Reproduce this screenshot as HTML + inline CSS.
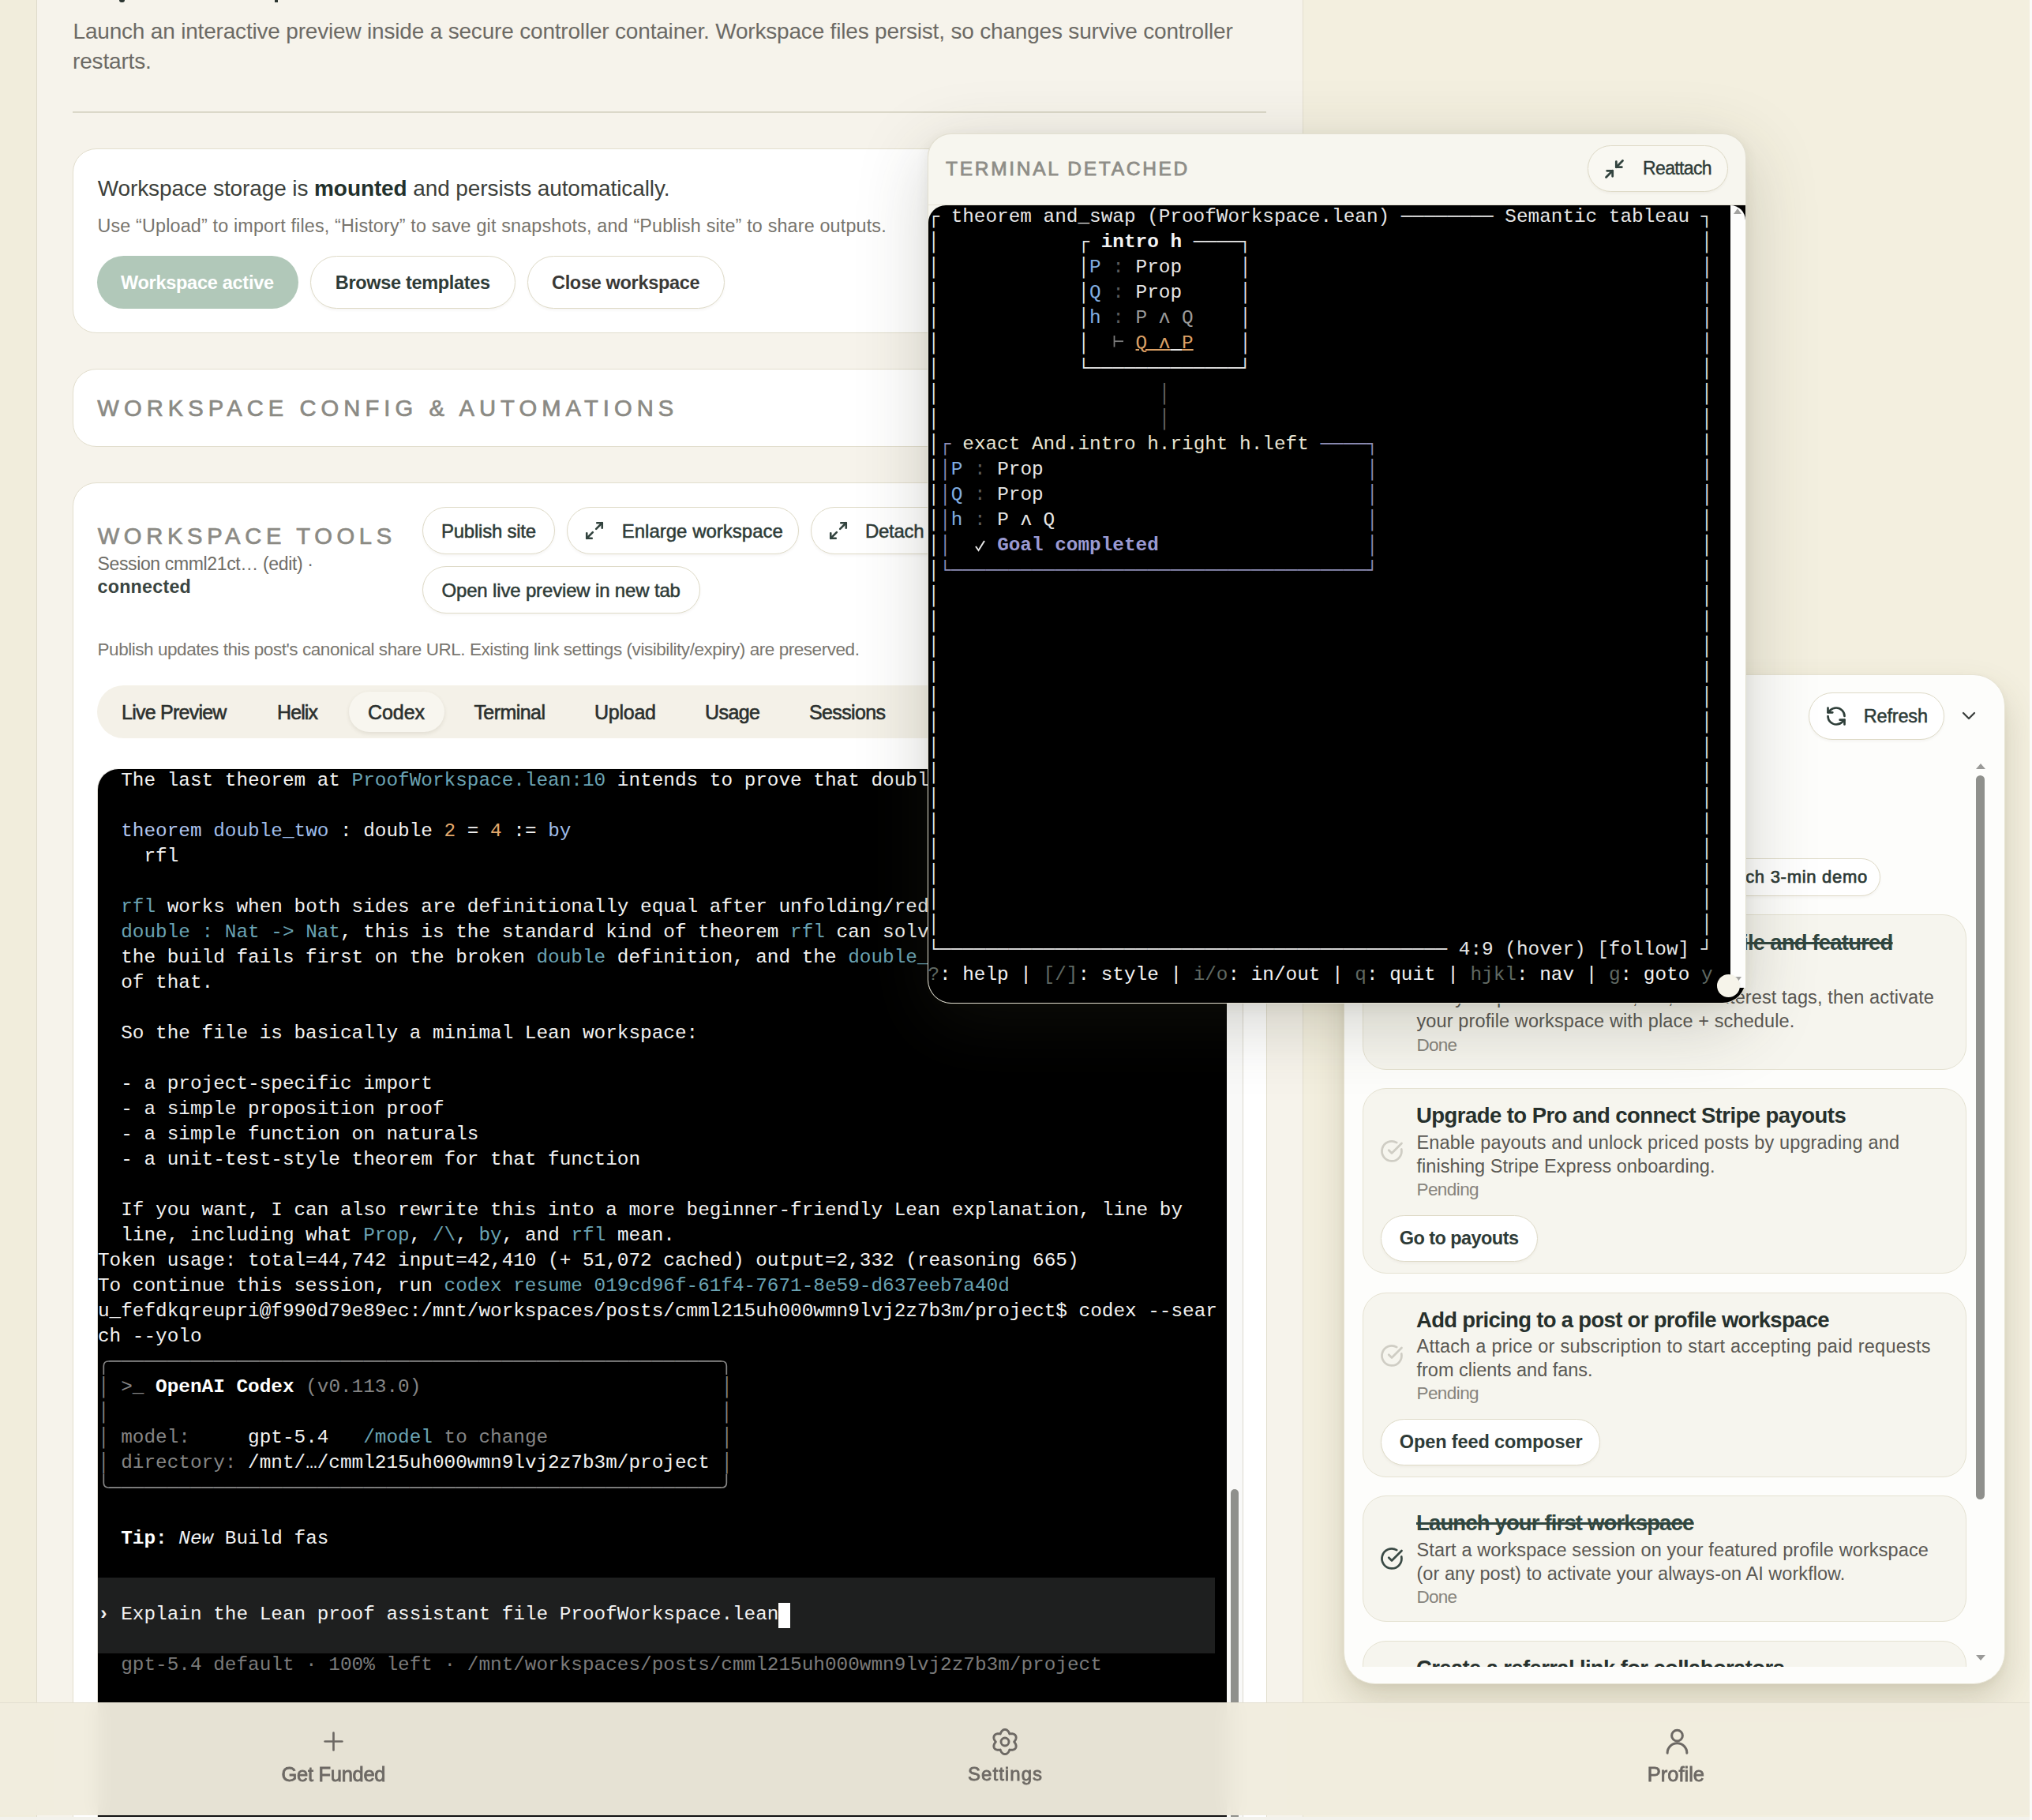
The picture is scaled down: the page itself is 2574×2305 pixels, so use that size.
<!DOCTYPE html><html><head><meta charset="utf-8"><style>
html,body{margin:0;padding:0;}
body{width:2574px;height:2305px;overflow:hidden;position:relative;background:#f3efdf;font-family:"Liberation Sans",sans-serif;}
.a{position:absolute;box-sizing:border-box;}
.t{position:absolute;white-space:pre;font-family:"Liberation Sans",sans-serif;}
.tr{position:absolute;white-space:pre;font-family:"Liberation Mono",monospace;font-size:24.36px;line-height:32px;color:#f2f2f2;}
.btn{position:absolute;box-sizing:border-box;background:#fff;border:1.5px solid #dedac7;border-radius:40px;box-shadow:0 2px 3px rgba(120,110,80,0.06);}
svg{position:absolute;overflow:visible;}
</style></head><body>
<div class="a" style="left:0px;top:0px;width:46px;height:2305px;background:#f1eddc;"></div><div class="a" style="left:46px;top:-60px;width:1605px;height:2460px;background:#f6f3eb;border-left:1px solid #dedacb;border-right:1px solid #e2decf;"></div><div class="a" style="left:151px;top:0px;width:7px;height:3px;background:#2b3531;border-radius:0 0 3px 3px;"></div><div class="a" style="left:348px;top:0px;width:4px;height:3px;background:#2b3531;"></div><div class="t" style="left:92.50px;top:26.29px;font-size:28px;line-height:28px;color:#6c6a65;font-weight:400;letter-spacing:-0.188px;">Launch an interactive preview inside a secure controller container. Workspace files persist, so changes survive controller</div><div class="t" style="left:92.00px;top:64.29px;font-size:28px;line-height:28px;color:#6c6a65;font-weight:400;letter-spacing:-0.17px;">restarts.</div><div class="a" style="left:92px;top:141px;width:1512px;height:2px;background:#dbd8c9;"></div><div class="a" style="left:92px;top:188px;width:1512px;height:234px;background:#fff;border:1.5px solid #e2decd;border-radius:30px;"></div><div class="t" style="left:123.70px;top:224.79px;font-size:28px;line-height:28px;color:#3c3f3b;font-weight:400;letter-spacing:-0.1px;">Workspace storage is <b style="color:#22312c">mounted</b> and persists automatically.</div><div class="t" style="left:123.50px;top:275.27px;font-size:23.3px;line-height:23.3px;color:#77746d;font-weight:400;letter-spacing:0.18px;">Use “Upload” to import files, “History” to save git snapshots, and “Publish site” to share outputs.</div><div class="a" style="left:123px;top:324px;width:255px;height:67px;background:#b1c8b9;border-radius:40px;"></div><div class="t" style="left:153.00px;top:346.70px;font-size:23.5px;line-height:23.5px;color:#ffffff;font-weight:700;letter-spacing:-0.273px;">Workspace active</div><div class="btn" style="left:393px;top:324px;width:260px;height:67px;"></div><div class="t" style="left:424.80px;top:346.70px;font-size:23.5px;line-height:23.5px;color:#2e3b37;font-weight:700;letter-spacing:-0.327px;">Browse templates</div><div class="btn" style="left:668px;top:324px;width:250px;height:67px;"></div><div class="t" style="left:699.00px;top:346.70px;font-size:23.5px;line-height:23.5px;color:#3a3936;font-weight:700;letter-spacing:-0.321px;">Close workspace</div><div class="a" style="left:92px;top:467px;width:1512px;height:99px;background:#fff;border:1.5px solid #e2decd;border-radius:30px;"></div><div class="t" style="left:123.30px;top:502.88px;font-size:29.2px;line-height:29.2px;color:#8b8a84;font-weight:400;letter-spacing:6.048px;-webkit-text-stroke:0.7px #8b8a84;">WORKSPACE CONFIG &amp; AUTOMATIONS</div><div class="a" style="left:92px;top:611px;width:1513px;height:1789px;background:#fff;border:1.5px solid #e2decd;border-radius:30px;"></div><div class="t" style="left:123.70px;top:665.08px;font-size:29.2px;line-height:29.2px;color:#8b8a84;font-weight:400;letter-spacing:5.636px;-webkit-text-stroke:0.7px #8b8a84;">WORKSPACE TOOLS</div><div class="t" style="left:123.50px;top:702.53px;font-size:23px;line-height:23px;color:#6e6c66;font-weight:400;letter-spacing:-0.36px;">Session cmml21ct… (edit) ·</div><div class="t" style="left:123.50px;top:732.07px;font-size:23.3px;line-height:23.3px;color:#3a4541;font-weight:700;letter-spacing:0.225px;">connected</div><div class="btn" style="left:535px;top:642px;width:168px;height:60px;"></div><div class="t" style="left:559.00px;top:660.88px;font-size:24px;line-height:24px;color:#2e3b37;font-weight:400;letter-spacing:-0.245px;-webkit-text-stroke:0.5px #2e3b37;">Publish site</div><div class="btn" style="left:718px;top:642px;width:294px;height:60px;"></div><svg style="left:740px;top:659px" width="26" height="26" viewBox="0 0 24 24" fill="none" stroke="#33443f" stroke-width="2.4" stroke-linecap="round" stroke-linejoin="round"><polyline points="15 3 21 3 21 9"/><polyline points="9 21 3 21 3 15"/><line x1="21" y1="3" x2="14" y2="10"/><line x1="3" y1="21" x2="10" y2="14"/></svg><div class="t" style="left:787.70px;top:660.88px;font-size:24px;line-height:24px;color:#2e3b37;font-weight:400;letter-spacing:0.006px;-webkit-text-stroke:0.5px #2e3b37;">Enlarge workspace</div><div class="btn" style="left:1027px;top:642px;width:294px;height:60px;"></div><svg style="left:1049px;top:659px" width="26" height="26" viewBox="0 0 24 24" fill="none" stroke="#33443f" stroke-width="2.4" stroke-linecap="round" stroke-linejoin="round"><polyline points="15 3 21 3 21 9"/><polyline points="9 21 3 21 3 15"/><line x1="21" y1="3" x2="14" y2="10"/><line x1="3" y1="21" x2="10" y2="14"/></svg><div class="t" style="left:1096.00px;top:660.88px;font-size:24px;line-height:24px;color:#2e3b37;font-weight:400;letter-spacing:-0.3px;-webkit-text-stroke:0.5px #2e3b37;">Detach terminal</div><div class="btn" style="left:535px;top:717px;width:352px;height:60px;"></div><div class="t" style="left:559.50px;top:736.18px;font-size:24px;line-height:24px;color:#2e3b37;font-weight:400;letter-spacing:-0.163px;-webkit-text-stroke:0.5px #2e3b37;">Open live preview in new tab</div><div class="t" style="left:123.50px;top:811.55px;font-size:22.5px;line-height:22.5px;color:#79766f;font-weight:400;letter-spacing:-0.446px;">Publish updates this post's canonical share URL. Existing link settings (visibility/expiry) are preserved.</div><div class="a" style="left:123px;top:868px;width:1451px;height:67px;background:#f4f1e8;border-radius:34px;"></div><div class="a" style="left:442px;top:876px;width:121px;height:51px;background:#f8f6ef;border-radius:26px;box-shadow:0 2px 5px rgba(90,80,50,0.12);"></div><div class="t" style="left:154.00px;top:890.23px;font-size:25px;line-height:25px;color:#2b302e;font-weight:400;letter-spacing:-0.755px;-webkit-text-stroke:0.6px #2b302e;">Live Preview</div><div class="t" style="left:351.00px;top:890.23px;font-size:25px;line-height:25px;color:#2b302e;font-weight:400;letter-spacing:-0.9px;-webkit-text-stroke:0.6px #2b302e;">Helix</div><div class="t" style="left:466.00px;top:890.23px;font-size:25px;line-height:25px;color:#2b302e;font-weight:400;letter-spacing:-0.075px;-webkit-text-stroke:0.6px #2b302e;">Codex</div><div class="t" style="left:600.40px;top:890.23px;font-size:25px;line-height:25px;color:#2b302e;font-weight:400;letter-spacing:-0.557px;-webkit-text-stroke:0.6px #2b302e;">Terminal</div><div class="t" style="left:753.00px;top:890.23px;font-size:25px;line-height:25px;color:#2b302e;font-weight:400;letter-spacing:-0.24px;-webkit-text-stroke:0.6px #2b302e;">Upload</div><div class="t" style="left:893.00px;top:890.23px;font-size:25px;line-height:25px;color:#2b302e;font-weight:400;letter-spacing:-0.575px;-webkit-text-stroke:0.6px #2b302e;">Usage</div><div class="t" style="left:1025.00px;top:890.23px;font-size:25px;line-height:25px;color:#2b302e;font-weight:400;letter-spacing:-0.629px;-webkit-text-stroke:0.6px #2b302e;">Sessions</div><div class="t" style="left:1185.00px;top:890.23px;font-size:25px;line-height:25px;color:#2b302e;font-weight:400;letter-spacing:1.2px;-webkit-text-stroke:0.6px #2b302e;">History</div><div class="a" style="left:123px;top:973px;width:1452px;height:1427px;background:#f9f9f8;border-left:1px solid #dcd9cf;border-right:1px solid #dcd9cf;border-top-left-radius:27px;"></div><div class="a" style="left:124px;top:973.5px;width:1430px;height:1426.5px;background:#000;border-top-left-radius:26px;"></div><div class="a" style="left:1558.5px;top:1886px;width:10.5px;height:514px;background:#8f908c;border-radius:5px;"></div><svg style="left:124.00px;top:1708.50px" width="15" height="32" viewBox="0 0 15 32" fill="none" stroke="#858585" stroke-width="1.72"><path d="M7.31 32 V21.0 Q7.31 15.0 13.309999999999999 15.0 H15.118378997599999"/></svg><svg style="left:913.39px;top:1708.50px" width="15" height="32" viewBox="0 0 15 32" fill="none" stroke="#858585" stroke-width="1.72"><path d="M-0.5 15.0 H1.3099999999999996 Q7.31 15.0 7.31 21.0 V32"/></svg><svg style="left:124.00px;top:1868.50px" width="15" height="32" viewBox="0 0 15 32" fill="none" stroke="#858585" stroke-width="1.72"><path d="M7.31 -2.2 V9.0 Q7.31 15.0 13.309999999999999 15.0 H15.118378997599999"/></svg><svg style="left:913.39px;top:1868.50px" width="15" height="32" viewBox="0 0 15 32" fill="none" stroke="#858585" stroke-width="1.72"><path d="M-0.5 15.0 H1.3099999999999996 Q7.31 15.0 7.31 9.0 V-2.2"/></svg><div class="a" style="left:124px;top:1997.5px;width:1415px;height:96.0px;background:#1e1f1f;"></div><div class="tr" style="left:124.00px;top:972.50px;">  The last theorem at <span style="color:#6aa3b3">ProofWorkspace.lean:10</span> intends to prove that double 2 = 4 by reflexivity.</div><div class="tr" style="left:124.00px;top:1036.50px;">  <span style="color:#b2c6ef">theorem</span> <span style="color:#9fbdea">double_two</span> : double <span style="color:#e2a86c">2</span> = <span style="color:#e2a86c">4</span> := <span style="color:#9fbdea">by</span></div><div class="tr" style="left:124.00px;top:1068.50px;">    rfl</div><div class="tr" style="left:124.00px;top:1132.50px;">  <span style="color:#6aa3b3">rfl</span> works when both sides are definitionally equal after unfolding/reduction.</div><div class="tr" style="left:124.00px;top:1164.50px;">  <span style="color:#6aa3b3">double : Nat -&gt; Nat</span>, this is the standard kind of theorem <span style="color:#6aa3b3">rfl</span> can solve. In this repo,</div><div class="tr" style="left:124.00px;top:1196.50px;">  the build fails first on the broken <span style="color:#6aa3b3">double</span> definition, and the <span style="color:#6aa3b3">double_two</span> proof fails because</div><div class="tr" style="left:124.00px;top:1228.50px;">  of that.</div><div class="tr" style="left:124.00px;top:1292.50px;">  So the file is basically a minimal Lean workspace:</div><div class="tr" style="left:124.00px;top:1356.50px;">  - a project-specific import</div><div class="tr" style="left:124.00px;top:1388.50px;">  - a simple proposition proof</div><div class="tr" style="left:124.00px;top:1420.50px;">  - a simple function on naturals</div><div class="tr" style="left:124.00px;top:1452.50px;">  - a unit-test-style theorem for that function</div><div class="tr" style="left:124.00px;top:1516.50px;">  If you want, I can also rewrite this into a more beginner-friendly Lean explanation, line by</div><div class="tr" style="left:124.00px;top:1548.50px;">  line, including what <span style="color:#6aa3b3">Prop</span>, <span style="color:#6aa3b3">/\</span>, <span style="color:#6aa3b3">by</span>, and <span style="color:#6aa3b3">rfl</span> mean.</div><div class="tr" style="left:124.00px;top:1580.50px;">Token usage: total=44,742 input=42,410 (+ 51,072 cached) output=2,332 (reasoning 665)</div><div class="tr" style="left:124.00px;top:1612.50px;">To continue this session, run <span style="color:#6aa3b3">codex resume 019cd96f-61f4-7671-8e59-d637eeb7a40d</span></div><div class="tr" style="left:124.00px;top:1644.50px;">u_fefdkqreupri@f990d79e89ec:/mnt/workspaces/posts/cmml215uh000wmn9lvj2z7b3m/project$ codex --sear</div><div class="tr" style="left:124.00px;top:1676.50px;">ch --yolo</div><div class="tr" style="left:124.00px;top:1708.50px;"><span style="color:#858585"> ───────────────────────────────────────────────────── </span></div><div class="tr" style="left:124.00px;top:1740.50px;"><span style="color:#858585">│</span><span style="color:#858585"> &gt;_ </span><span style="font-weight:700;color:#fff">OpenAI Codex</span><span style="color:#858585"> (v0.113.0)</span>                          <span style="color:#858585">│</span></div><div class="tr" style="left:124.00px;top:1772.50px;"><span style="color:#858585">│                                                     │</span></div><div class="tr" style="left:124.00px;top:1804.50px;"><span style="color:#858585">│</span><span style="color:#858585"> model:     </span>gpt-5.4   <span style="color:#6aa3b3">/model</span><span style="color:#858585"> to change</span>               <span style="color:#858585">│</span></div><div class="tr" style="left:124.00px;top:1836.50px;"><span style="color:#858585">│</span><span style="color:#858585"> directory: </span>/mnt/…/cmml215uh000wmn9lvj2z7b3m/project <span style="color:#858585">│</span></div><div class="tr" style="left:124.00px;top:1868.50px;"><span style="color:#858585"> ───────────────────────────────────────────────────── </span></div><div class="tr" style="left:124.00px;top:1932.50px;">  <span style="font-weight:700;color:#fff">Tip:</span> <span style="font-style:italic">New</span> Build fas</div><div class="tr" style="left:124.00px;top:2092.50px;"><span style="color:#7a7a7a">  gpt-5.4 default · 100% left · /mnt/workspaces/posts/cmml215uh000wmn9lvj2z7b3m/project</span></div><div class="tr" style="left:124.00px;top:2028.50px;"><span style="font-weight:700">› </span>Explain the Lean proof assistant file ProofWorkspace.lean</div><div class="a" style="left:986px;top:2030px;width:15px;height:32px;background:#fff;"></div><div class="a" style="left:1702px;top:854px;width:838px;height:1279px;background:#fdfdfb;border:1px solid #e7e3d3;border-radius:40px;box-shadow:0 22px 44px rgba(90,80,40,0.20), 0 4px 10px rgba(90,80,40,0.06);"></div><div class="btn" style="left:2291px;top:877px;width:172px;height:60px;"></div><svg style="left:2312px;top:893px" width="28" height="28" viewBox="0 0 24 24" fill="none" stroke="#2f3f3a" stroke-width="2.3" stroke-linecap="round" stroke-linejoin="round"><path d="M21 12a9 9 0 0 0-9-9 9.75 9.75 0 0 0-6.74 2.74L3 8"/><path d="M3 3v5h5"/><path d="M3 12a9 9 0 0 0 9 9 9.75 9.75 0 0 0 6.74-2.74L21 16"/><path d="M16 16h5v5"/></svg><div class="t" style="left:2360.80px;top:895.70px;font-size:23.5px;line-height:23.5px;color:#2e3b37;font-weight:400;letter-spacing:-0.183px;-webkit-text-stroke:0.5px #2e3b37;">Refresh</div><svg style="left:2482px;top:894px" width="24" height="24" viewBox="0 0 24 24" fill="none" stroke="#3b3f3d" stroke-width="2.3" stroke-linecap="round" stroke-linejoin="round"><polyline points="5 9 12 16 19 9"/></svg><div class="btn" style="left:2120px;top:1087px;width:262px;height:48px;"></div><div class="t" style="left:2170.70px;top:1099.87px;font-size:22px;line-height:22px;color:#2e3b37;font-weight:400;letter-spacing:0.72px;-webkit-text-stroke:0.7px #2e3b37;">Watch 3-min demo</div><div class="a" style="left:1702px;top:966px;width:838px;height:1145px;overflow:hidden;"><div class="a" style="left:23.5px;top:192px;width:765px;height:197.3px;background:#f6f5ee;border:1.5px solid #e5e2d2;border-radius:30px;"></div><div class="t" style="left:-304.40px;top:214.22px;font-size:27.5px;line-height:27.5px;color:#30463f;font-weight:700;letter-spacing:-0.8px;width:1000px;text-align:right;text-decoration:line-through;text-decoration-thickness:2.5px;">Complete your professional profile and featured</div><div class="t" style="left:92.00px;top:246.72px;font-size:27.5px;line-height:27.5px;color:#30463f;font-weight:700;letter-spacing:-0.9px;text-decoration:line-through;text-decoration-thickness:2.5px;">workspace</div><div class="t" style="left:92.50px;top:285.80px;font-size:23.5px;line-height:23.5px;color:#5a5853;font-weight:400;letter-spacing:0.115px;">Add your professional title, bio, and interest tags, then activate</div><div class="t" style="left:92.50px;top:315.90px;font-size:23.5px;line-height:23.5px;color:#5a5853;font-weight:400;letter-spacing:0.12px;">your profile workspace with place + schedule.</div><div class="t" style="left:92.50px;top:346.95px;font-size:22.5px;line-height:22.5px;color:#87847d;font-weight:400;letter-spacing:-0.8px;">Done</div><div class="a" style="left:23.5px;top:412.29999999999995px;width:765px;height:234.7px;background:#f6f5ee;border:1.5px solid #e5e2d2;border-radius:30px;"></div><div class="t" style="left:92.00px;top:433.32px;font-size:27.5px;line-height:27.5px;color:#26302c;font-weight:700;letter-spacing:-0.555px;">Upgrade to Pro and connect Stripe payouts</div><div class="t" style="left:92.50px;top:470.00px;font-size:23.5px;line-height:23.5px;color:#5a5853;font-weight:400;letter-spacing:0.146px;">Enable payouts and unlock priced posts by upgrading and</div><div class="t" style="left:92.50px;top:500.00px;font-size:23.5px;line-height:23.5px;color:#5a5853;font-weight:400;letter-spacing:0.051px;">finishing Stripe Express onboarding.</div><div class="t" style="left:92.50px;top:529.85px;font-size:22.5px;line-height:22.5px;color:#87847d;font-weight:400;letter-spacing:-0.583px;">Pending</div><svg style="left:46px;top:477.29999999999995px" width="30" height="30" viewBox="0 0 24 24" fill="none" stroke="#cfcdc4" stroke-width="2.2" stroke-linecap="round" stroke-linejoin="round"><path d="M21.8 10A10 10 0 1 1 17 3.3"/><path d="m9 11 3 3L22 4"/></svg><div class="btn" style="left:47px;top:572.7px;width:199px;height:59px;"></div><div class="t" style="left:70.80px;top:590.70px;font-size:23.5px;line-height:23.5px;color:#2e3b37;font-weight:700;letter-spacing:-0.567px;">Go to payouts</div><div class="a" style="left:23.5px;top:670.5px;width:765px;height:234.9px;background:#f6f5ee;border:1.5px solid #e5e2d2;border-radius:30px;"></div><div class="t" style="left:92.00px;top:691.52px;font-size:27.5px;line-height:27.5px;color:#26302c;font-weight:700;letter-spacing:-0.683px;">Add pricing to a post or profile workspace</div><div class="t" style="left:92.50px;top:728.20px;font-size:23.5px;line-height:23.5px;color:#5a5853;font-weight:400;letter-spacing:0.24px;">Attach a price or subscription to start accepting paid requests</div><div class="t" style="left:92.50px;top:758.20px;font-size:23.5px;line-height:23.5px;color:#5a5853;font-weight:400;letter-spacing:-0.01px;">from clients and fans.</div><div class="t" style="left:92.50px;top:788.05px;font-size:22.5px;line-height:22.5px;color:#87847d;font-weight:400;letter-spacing:-0.583px;">Pending</div><svg style="left:46px;top:735.5px" width="30" height="30" viewBox="0 0 24 24" fill="none" stroke="#cfcdc4" stroke-width="2.2" stroke-linecap="round" stroke-linejoin="round"><path d="M21.8 10A10 10 0 1 1 17 3.3"/><path d="m9 11 3 3L22 4"/></svg><div class="btn" style="left:47px;top:830.9000000000001px;width:278px;height:59px;"></div><div class="t" style="left:70.80px;top:848.90px;font-size:23.5px;line-height:23.5px;color:#2e3b37;font-weight:700;letter-spacing:-0.118px;">Open feed composer</div><div class="a" style="left:23.5px;top:928.4000000000001px;width:765px;height:159.6px;background:#f6f5ee;border:1.5px solid #e5e2d2;border-radius:30px;"></div><div class="t" style="left:92.00px;top:949.42px;font-size:27.5px;line-height:27.5px;color:#30463f;font-weight:700;letter-spacing:-0.85px;text-decoration:line-through;text-decoration-thickness:2.5px;">Launch your first workspace</div><div class="t" style="left:92.50px;top:986.10px;font-size:23.5px;line-height:23.5px;color:#5a5853;font-weight:400;letter-spacing:0.12px;">Start a workspace session on your featured profile workspace</div><div class="t" style="left:92.50px;top:1016.10px;font-size:23.5px;line-height:23.5px;color:#5a5853;font-weight:400;letter-spacing:0.04px;">(or any post) to activate your always-on AI workflow.</div><div class="t" style="left:92.50px;top:1045.95px;font-size:22.5px;line-height:22.5px;color:#87847d;font-weight:400;letter-spacing:-0.8px;">Done</div><svg style="left:46px;top:993.4000000000001px" width="30" height="30" viewBox="0 0 24 24" fill="none" stroke="#3a4a45" stroke-width="2.2" stroke-linecap="round" stroke-linejoin="round"><path d="M21.8 10A10 10 0 1 1 17 3.3"/><path d="m9 11 3 3L22 4"/></svg><div class="a" style="left:23.5px;top:1112px;width:765px;height:200px;background:#f6f5ee;border:1.5px solid #e5e2d2;border-radius:30px;"></div><div class="t" style="left:92.00px;top:1133.02px;font-size:27.5px;line-height:27.5px;color:#26302c;font-weight:700;letter-spacing:-0.651px;">Create a referral link for collaborators</div><div class="t" style="left:92.50px;top:1169.70px;font-size:23.5px;line-height:23.5px;color:#5a5853;font-weight:400;letter-spacing:2.943px;">Share your referral link</div><div class="t" style="left:92.50px;top:1199.55px;font-size:22.5px;line-height:22.5px;color:#87847d;font-weight:400;letter-spacing:-0.583px;">Pending</div><svg style="left:46px;top:1177px" width="30" height="30" viewBox="0 0 24 24" fill="none" stroke="#cfcdc4" stroke-width="2.2" stroke-linecap="round" stroke-linejoin="round"><path d="M21.8 10A10 10 0 1 1 17 3.3"/><path d="m9 11 3 3L22 4"/></svg></div><div class="a" style="left:2503px;top:982px;width:11px;height:917px;background:#8f908c;border-radius:6px;"></div><svg style="left:2502px;top:966px" width="14" height="10" viewBox="0 0 14 10"><polygon points="7,1 13,8 1,8" fill="#9a9a98"/></svg><svg style="left:2502px;top:2094px" width="14" height="10" viewBox="0 0 14 10"><polygon points="1,2 13,2 7,9" fill="#9a9a98"/></svg><div class="a" style="left:1175px;top:168.5px;width:1037px;height:1102.5px;background:#f7f6ef;border:1px solid #e2dfd0;border-radius:30px;box-shadow:0 24px 90px rgba(60,58,40,0.22), 0 4px 16px rgba(60,58,40,0.08);"></div><div class="a" style="left:1175px;top:168.5px;width:1037px;height:91.5px;background:#f7f6ef;border:1px solid #e2dfd0;border-bottom:1px solid #e6e3d6;border-radius:30px 30px 0 0;"></div><div class="t" style="left:1198.00px;top:202.26px;font-size:24.5px;line-height:24.5px;color:#8e8d87;font-weight:400;letter-spacing:2.725px;-webkit-text-stroke:0.8px #8e8d87;">TERMINAL DETACHED</div><div class="btn" style="left:2011px;top:184px;width:178px;height:59px;background:#f9f8f2;"></div><svg style="left:2031px;top:200px" width="28" height="28" viewBox="0 0 24 24" fill="none" stroke="#33443f" stroke-width="2.4" stroke-linecap="round" stroke-linejoin="round"><polyline points="4 14 10 14 10 20"/><polyline points="20 10 14 10 14 4"/><line x1="14" y1="10" x2="21" y2="3"/><line x1="3" y1="21" x2="10" y2="14"/></svg><div class="t" style="left:2081.00px;top:201.83px;font-size:23px;line-height:23px;color:#2e3b37;font-weight:400;letter-spacing:-0.629px;-webkit-text-stroke:0.4px #2e3b37;">Reattach</div><div class="a" style="left:1176px;top:260px;width:1035px;height:1010px;background:#000;border-radius:22px 0 29px 29px;"></div><div class="a" style="left:2192px;top:260px;width:19px;height:991px;background:#fdfdfc;border-top-right-radius:26px;"></div><svg style="left:2194px;top:262px" width="14" height="12" viewBox="0 0 14 12"><polygon points="7,2 12,9 2,9" fill="#a3a3a1"/></svg><svg style="left:2194px;top:1234px" width="14" height="12" viewBox="0 0 14 12"><polygon points="2,3 12,3 7,10" fill="#a3a3a1"/></svg><div class="tr" style="left:1175.40px;top:258.60px;"><span style="color:#e6e6e6">┌ theorem and_swap (ProofWorkspace.lean) ──────── Semantic tableau ┐</span></div><div class="tr" style="left:1175.40px;top:290.60px;"><span style="color:#e6e6e6">│</span>            <span style="color:#e6e6e6">┌</span> <span style="font-weight:700;color:#f4f4f4">intro h</span> <span style="color:#e6e6e6">────┐</span>                                       <span style="color:#e6e6e6">│</span></div><div class="tr" style="left:1175.40px;top:322.60px;"><span style="color:#e6e6e6">│</span>            <span style="color:#e6e6e6">│</span><span style="color:#82aee0">P</span> <span style="color:#5c5c5c">:</span> <span style="color:#e6e6e6">Prop</span>     <span style="color:#e6e6e6">│</span>                                       <span style="color:#e6e6e6">│</span></div><div class="tr" style="left:1175.40px;top:354.60px;"><span style="color:#e6e6e6">│</span>            <span style="color:#e6e6e6">│</span><span style="color:#82aee0">Q</span> <span style="color:#5c5c5c">:</span> <span style="color:#e6e6e6">Prop</span>     <span style="color:#e6e6e6">│</span>                                       <span style="color:#e6e6e6">│</span></div><div class="tr" style="left:1175.40px;top:386.60px;"><span style="color:#e6e6e6">│</span>            <span style="color:#e6e6e6">│</span><span style="color:#82aee0">h</span> <span style="color:#5c5c5c">:</span> <span style="color:#9a9a9a">P ʌ Q</span>    <span style="color:#e6e6e6">│</span>                                       <span style="color:#e6e6e6">│</span></div><div class="tr" style="left:1175.40px;top:418.60px;"><span style="color:#e6e6e6">│</span>            <span style="color:#e6e6e6">│</span>    <span style="color:#dba066;text-decoration:underline;text-underline-offset:1px;text-decoration-thickness:2px">Q ʌ</span><span style="color:#e6e6e6;text-decoration:underline;text-underline-offset:1px;text-decoration-thickness:2px"> </span><span style="color:#dba066;text-decoration:underline;text-underline-offset:1px;text-decoration-thickness:2px">P</span>    <span style="color:#e6e6e6">│</span>                                       <span style="color:#e6e6e6">│</span></div><div class="tr" style="left:1175.40px;top:450.60px;"><span style="color:#e6e6e6">│</span>            <span style="color:#e6e6e6">└─────────────┘</span>                                       <span style="color:#e6e6e6">│</span></div><div class="tr" style="left:1175.40px;top:482.60px;"><span style="color:#e6e6e6">│</span>                   <span style="color:#6a6a6a">│</span>                                              <span style="color:#e6e6e6">│</span></div><div class="tr" style="left:1175.40px;top:514.60px;"><span style="color:#e6e6e6">│</span>                   <span style="color:#6a6a6a">│</span>                                              <span style="color:#e6e6e6">│</span></div><div class="tr" style="left:1175.40px;top:546.60px;"><span style="color:#e6e6e6">│</span><span style="color:#8d8db5">┌</span> <span style="color:#e8e4d2">exact And.intro h.right h.left</span> <span style="color:#8d8db5">────┐</span>                            <span style="color:#e6e6e6">│</span></div><div class="tr" style="left:1175.40px;top:578.60px;"><span style="color:#e6e6e6">│</span><span style="color:#8d8db5">│</span><span style="color:#82aee0">P</span> <span style="color:#5c5c5c">:</span> <span style="color:#e6e6e6">Prop</span>                            <span style="color:#8d8db5">│</span>                            <span style="color:#e6e6e6">│</span></div><div class="tr" style="left:1175.40px;top:610.60px;"><span style="color:#e6e6e6">│</span><span style="color:#8d8db5">│</span><span style="color:#82aee0">Q</span> <span style="color:#5c5c5c">:</span> <span style="color:#e6e6e6">Prop</span>                            <span style="color:#8d8db5">│</span>                            <span style="color:#e6e6e6">│</span></div><div class="tr" style="left:1175.40px;top:642.60px;"><span style="color:#e6e6e6">│</span><span style="color:#8d8db5">│</span><span style="color:#82aee0">h</span> <span style="color:#5c5c5c">:</span> <span style="color:#e6e6e6">P ʌ Q</span>                           <span style="color:#8d8db5">│</span>                            <span style="color:#e6e6e6">│</span></div><div class="tr" style="left:1175.40px;top:674.60px;"><span style="color:#e6e6e6">│</span><span style="color:#8d8db5">│</span>    <span style="font-weight:700;color:#9a9ad2">Goal completed</span>                  <span style="color:#8d8db5">│</span>                            <span style="color:#e6e6e6">│</span></div><div class="tr" style="left:1175.40px;top:706.60px;"><span style="color:#e6e6e6">│</span><span style="color:#8d8db5">└────────────────────────────────────┘</span>                            <span style="color:#e6e6e6">│</span></div><div class="tr" style="left:1175.40px;top:738.60px;"><span style="color:#e6e6e6">│</span>                                                                  <span style="color:#e6e6e6">│</span></div><div class="tr" style="left:1175.40px;top:770.60px;"><span style="color:#e6e6e6">│</span>                                                                  <span style="color:#e6e6e6">│</span></div><div class="tr" style="left:1175.40px;top:802.60px;"><span style="color:#e6e6e6">│</span>                                                                  <span style="color:#e6e6e6">│</span></div><div class="tr" style="left:1175.40px;top:834.60px;"><span style="color:#e6e6e6">│</span>                                                                  <span style="color:#e6e6e6">│</span></div><div class="tr" style="left:1175.40px;top:866.60px;"><span style="color:#e6e6e6">│</span>                                                                  <span style="color:#e6e6e6">│</span></div><div class="tr" style="left:1175.40px;top:898.60px;"><span style="color:#e6e6e6">│</span>                                                                  <span style="color:#e6e6e6">│</span></div><div class="tr" style="left:1175.40px;top:930.60px;"><span style="color:#e6e6e6">│</span>                                                                  <span style="color:#e6e6e6">│</span></div><div class="tr" style="left:1175.40px;top:962.60px;"><span style="color:#e6e6e6">│</span>                                                                  <span style="color:#e6e6e6">│</span></div><div class="tr" style="left:1175.40px;top:994.60px;"><span style="color:#e6e6e6">│</span>                                                                  <span style="color:#e6e6e6">│</span></div><div class="tr" style="left:1175.40px;top:1026.60px;"><span style="color:#e6e6e6">│</span>                                                                  <span style="color:#e6e6e6">│</span></div><div class="tr" style="left:1175.40px;top:1058.60px;"><span style="color:#e6e6e6">│</span>                                                                  <span style="color:#e6e6e6">│</span></div><div class="tr" style="left:1175.40px;top:1090.60px;"><span style="color:#e6e6e6">│</span>                                                                  <span style="color:#e6e6e6">│</span></div><div class="tr" style="left:1175.40px;top:1122.60px;"><span style="color:#e6e6e6">│</span>                                                                  <span style="color:#e6e6e6">│</span></div><div class="tr" style="left:1175.40px;top:1154.60px;"><span style="color:#e6e6e6">│</span>                                                                  <span style="color:#e6e6e6">│</span></div><div class="tr" style="left:1175.40px;top:1186.60px;"><span style="color:#e6e6e6">└──────────────────────────────────────────── 4:9 (hover) [follow] ┘</span></div><div class="tr" style="left:1175.40px;top:1218.60px;"><span style="color:#5f6862">?</span>: help | <span style="color:#5f6862">[/]</span>: style | <span style="color:#5f6862">i/o</span>: in/out | <span style="color:#5f6862">q</span>: quit | <span style="color:#5f6862">hjkl</span>: nav | <span style="color:#5f6862">g</span>: goto <span style="color:#5f6862">y</span></div><svg style="left:1409.3px;top:418.6px" width="15" height="32" viewBox="0 0 15 32" fill="none" stroke="#7a7a7a" stroke-width="1.8"><line x1="2.5" y1="6" x2="2.5" y2="20.5"/><line x1="2.5" y1="13.2" x2="14" y2="13.2"/></svg><svg style="left:1233.9px;top:674.6px" width="15" height="32" viewBox="0 0 15 32" fill="none" stroke="#e8e8e8" stroke-width="2"><polyline points="2,17 5.5,22 13,10"/></svg><div class="a" style="left:2174.5px;top:1233.5px;width:29.0px;height:29.0px;background:#f6f4ea;border-radius:50%;box-shadow:0 1px 2px rgba(0,0,0,0.15);"></div><div class="a" style="left:0px;top:2156px;width:2574px;height:143px;background:rgba(240,236,222,0.955);border-top:1px solid #e3dfd0;backdrop-filter:blur(12px);-webkit-backdrop-filter:blur(12px);"></div><div class="a" style="left:124px;top:2298.5px;width:1430px;height:2.0px;background:#111;"></div><div class="a" style="left:0px;top:2300.5px;width:2574px;height:4.5px;background:#f3f2ec;"></div><svg style="left:408px;top:2191px" width="29" height="29" viewBox="0 0 24 24" fill="none" stroke="#6d6964" stroke-width="2.2" stroke-linecap="round"><line x1="12" y1="3" x2="12" y2="21"/><line x1="3" y1="12" x2="21" y2="12"/></svg><div class="t" style="left:356.50px;top:2235.11px;font-size:25.5px;line-height:25.5px;color:#6d6964;font-weight:400;letter-spacing:-0.3px;-webkit-text-stroke:0.8px #6d6964;">Get Funded</div><svg style="left:1252.5px;top:2185.6px" width="40" height="40" viewBox="0 0 40 40" fill="none" stroke="#6d6964" stroke-width="2.9" stroke-linejoin="round"><path d="M31.60 20.00 L31.75 19.79 L31.93 19.58 L32.10 19.37 L32.28 19.14 L32.46 18.91 L32.63 18.67 L32.80 18.43 L32.96 18.18 L33.11 17.92 L33.26 17.66 L33.40 17.40 L33.53 17.12 L33.64 16.85 L33.75 16.57 L33.84 16.29 L33.92 16.01 L33.99 15.72 L34.05 15.44 L34.08 15.15 L34.11 14.86 L34.12 14.58 L34.11 14.30 L34.09 14.02 L34.06 13.74 L34.00 13.47 L33.93 13.20 L33.85 12.94 L33.75 12.69 L33.64 12.44 L33.51 12.20 L33.37 11.97 L33.21 11.75 L33.04 11.53 L32.85 11.33 L32.66 11.14 L32.45 10.96 L32.23 10.79 L31.99 10.63 L31.75 10.48 L31.50 10.35 L31.24 10.23 L30.97 10.12 L30.70 10.02 L30.42 9.94 L30.13 9.87 L29.84 9.81 L29.55 9.76 L29.25 9.72 L28.96 9.70 L28.66 9.68 L28.36 9.68 L28.06 9.69 L27.76 9.70 L27.46 9.73 L27.17 9.76 L26.88 9.79 L26.60 9.84 L26.32 9.88 L26.05 9.92 L25.80 9.95 L25.70 9.72 L25.60 9.46 L25.50 9.20 L25.40 8.94 L25.28 8.67 L25.17 8.40 L25.04 8.13 L24.90 7.87 L24.76 7.60 L24.61 7.35 L24.44 7.09 L24.27 6.85 L24.09 6.61 L23.91 6.38 L23.71 6.16 L23.50 5.94 L23.29 5.74 L23.07 5.55 L22.84 5.38 L22.61 5.21 L22.37 5.06 L22.12 4.93 L21.87 4.81 L21.61 4.70 L21.35 4.61 L21.08 4.53 L20.81 4.48 L20.54 4.43 L20.27 4.41 L20.00 4.40 L19.73 4.41 L19.46 4.43 L19.19 4.48 L18.92 4.53 L18.65 4.61 L18.39 4.70 L18.13 4.81 L17.88 4.93 L17.63 5.06 L17.39 5.21 L17.16 5.38 L16.93 5.55 L16.71 5.74 L16.50 5.94 L16.29 6.16 L16.09 6.38 L15.91 6.61 L15.73 6.85 L15.56 7.09 L15.39 7.35 L15.24 7.60 L15.10 7.87 L14.96 8.13 L14.83 8.40 L14.72 8.67 L14.60 8.94 L14.50 9.20 L14.40 9.46 L14.30 9.72 L14.20 9.95 L13.95 9.92 L13.68 9.88 L13.40 9.84 L13.12 9.79 L12.83 9.76 L12.54 9.73 L12.24 9.70 L11.94 9.69 L11.64 9.68 L11.34 9.68 L11.04 9.70 L10.75 9.72 L10.45 9.76 L10.16 9.81 L9.87 9.87 L9.58 9.94 L9.30 10.02 L9.03 10.12 L8.76 10.23 L8.50 10.35 L8.25 10.48 L8.01 10.63 L7.77 10.79 L7.55 10.96 L7.34 11.14 L7.15 11.33 L6.96 11.53 L6.79 11.75 L6.63 11.97 L6.49 12.20 L6.36 12.44 L6.25 12.69 L6.15 12.94 L6.07 13.20 L6.00 13.47 L5.94 13.74 L5.91 14.02 L5.89 14.30 L5.88 14.58 L5.89 14.86 L5.92 15.15 L5.95 15.44 L6.01 15.72 L6.08 16.01 L6.16 16.29 L6.25 16.57 L6.36 16.85 L6.47 17.12 L6.60 17.40 L6.74 17.66 L6.89 17.92 L7.04 18.18 L7.20 18.43 L7.37 18.67 L7.54 18.91 L7.72 19.14 L7.90 19.37 L8.07 19.58 L8.25 19.79 L8.40 20.00 L8.25 20.21 L8.07 20.42 L7.90 20.63 L7.72 20.86 L7.54 21.09 L7.37 21.33 L7.20 21.57 L7.04 21.82 L6.89 22.08 L6.74 22.34 L6.60 22.60 L6.47 22.88 L6.36 23.15 L6.25 23.43 L6.16 23.71 L6.08 23.99 L6.01 24.28 L5.95 24.56 L5.92 24.85 L5.89 25.14 L5.88 25.42 L5.89 25.70 L5.91 25.98 L5.94 26.26 L6.00 26.53 L6.07 26.80 L6.15 27.06 L6.25 27.31 L6.36 27.56 L6.49 27.80 L6.63 28.03 L6.79 28.25 L6.96 28.47 L7.15 28.67 L7.34 28.86 L7.55 29.04 L7.77 29.21 L8.01 29.37 L8.25 29.52 L8.50 29.65 L8.76 29.77 L9.03 29.88 L9.30 29.98 L9.58 30.06 L9.87 30.13 L10.16 30.19 L10.45 30.24 L10.75 30.28 L11.04 30.30 L11.34 30.32 L11.64 30.32 L11.94 30.31 L12.24 30.30 L12.54 30.27 L12.83 30.24 L13.12 30.21 L13.40 30.16 L13.68 30.12 L13.95 30.08 L14.20 30.05 L14.30 30.28 L14.40 30.54 L14.50 30.80 L14.60 31.06 L14.72 31.33 L14.83 31.60 L14.96 31.87 L15.10 32.13 L15.24 32.40 L15.39 32.65 L15.56 32.91 L15.73 33.15 L15.91 33.39 L16.09 33.62 L16.29 33.84 L16.50 34.06 L16.71 34.26 L16.93 34.45 L17.16 34.62 L17.39 34.79 L17.63 34.94 L17.88 35.07 L18.13 35.19 L18.39 35.30 L18.65 35.39 L18.92 35.47 L19.19 35.52 L19.46 35.57 L19.73 35.59 L20.00 35.60 L20.27 35.59 L20.54 35.57 L20.81 35.52 L21.08 35.47 L21.35 35.39 L21.61 35.30 L21.87 35.19 L22.12 35.07 L22.37 34.94 L22.61 34.79 L22.84 34.62 L23.07 34.45 L23.29 34.26 L23.50 34.06 L23.71 33.84 L23.91 33.62 L24.09 33.39 L24.27 33.15 L24.44 32.91 L24.61 32.65 L24.76 32.40 L24.90 32.13 L25.04 31.87 L25.17 31.60 L25.28 31.33 L25.40 31.06 L25.50 30.80 L25.60 30.54 L25.70 30.28 L25.80 30.05 L26.05 30.08 L26.32 30.12 L26.60 30.16 L26.88 30.21 L27.17 30.24 L27.46 30.27 L27.76 30.30 L28.06 30.31 L28.36 30.32 L28.66 30.32 L28.96 30.30 L29.25 30.28 L29.55 30.24 L29.84 30.19 L30.13 30.13 L30.42 30.06 L30.70 29.98 L30.97 29.88 L31.24 29.77 L31.50 29.65 L31.75 29.52 L31.99 29.37 L32.23 29.21 L32.45 29.04 L32.66 28.86 L32.85 28.67 L33.04 28.47 L33.21 28.25 L33.37 28.03 L33.51 27.80 L33.64 27.56 L33.75 27.31 L33.85 27.06 L33.93 26.80 L34.00 26.53 L34.06 26.26 L34.09 25.98 L34.11 25.70 L34.12 25.42 L34.11 25.14 L34.08 24.85 L34.05 24.56 L33.99 24.28 L33.92 23.99 L33.84 23.71 L33.75 23.43 L33.64 23.15 L33.53 22.88 L33.40 22.60 L33.26 22.34 L33.11 22.08 L32.96 21.82 L32.80 21.57 L32.63 21.33 L32.46 21.09 L32.28 20.86 L32.10 20.63 L31.93 20.42 L31.75 20.21Z"/><circle cx="20" cy="20" r="5"/></svg><div class="t" style="left:1226.00px;top:2235.48px;font-size:24px;line-height:24px;color:#6d6964;font-weight:400;letter-spacing:1.043px;-webkit-text-stroke:0.8px #6d6964;">Settings</div><svg style="left:2108px;top:2187px" width="33" height="36" viewBox="0 0 24 26" fill="none" stroke="#6d6964" stroke-width="2.2" stroke-linecap="round" stroke-linejoin="round"><circle cx="12" cy="8" r="5"/><path d="M3 24a9 9 0 0 1 18 0"/></svg><div class="t" style="left:2086.80px;top:2235.21px;font-size:25.5px;line-height:25.5px;color:#6d6964;font-weight:400;letter-spacing:-0.017px;-webkit-text-stroke:0.8px #6d6964;">Profile</div><div class="a" style="left:2571px;top:0px;width:3px;height:2305px;background:#fbfbf8;"></div></body></html>
